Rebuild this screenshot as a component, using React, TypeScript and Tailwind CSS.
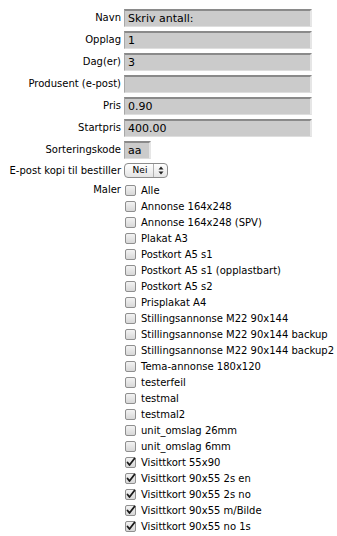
import React from "react";

const font = { fontFamily: '"DejaVu Sans", Verdana, sans-serif' };

function Input({ value, w = "w-[188px]" }: { value: string; w?: string }) {
  return (
    <div
      className={`${w} h-[18px] bg-[#cbcbcb] border-t-2 border-t-[#8a8a8a] border-l border-l-[#a8a8a8] border-r-2 border-r-[#e6e6e6] border-b border-b-[#dedede] pl-[3px] text-[11px] leading-[15px] text-black`}
    >
      {value}
    </div>
  );
}

function Box({ checked }: { checked: boolean }) {
  return (
    <svg width="12" height="12" viewBox="0 0 12 12" className="shrink-0">
      <defs>
        <linearGradient id="cbg" x1="0" y1="0" x2="0" y2="1">
          <stop offset="0" stopColor="#f4f4f4" />
          <stop offset="1" stopColor="#d6d6d6" />
        </linearGradient>
      </defs>
      <rect x="1.5" y="1.5" width="10" height="10" rx="1.5" fill="url(#cbg)" stroke="#8f8f8f" />
      {checked && (
        <path d="M3.5 6.5 L5.5 9 L10.5 2.5" fill="none" stroke="#1a1a1a" strokeWidth="1.8" strokeLinecap="round" strokeLinejoin="round" />
      )}
    </svg>
  );
}

const items: [string, boolean][] = [
  ["Alle", false],
  ["Annonse 164x248", false],
  ["Annonse 164x248 (SPV)", false],
  ["Plakat A3", false],
  ["Postkort A5 s1", false],
  ["Postkort A5 s1 (opplastbart)", false],
  ["Postkort A5 s2", false],
  ["Prisplakat A4", false],
  ["Stillingsannonse M22 90x144", false],
  ["Stillingsannonse M22 90x144 backup", false],
  ["Stillingsannonse M22 90x144 backup2", false],
  ["Tema-annonse 180x120", false],
  ["testerfeil", false],
  ["testmal", false],
  ["testmal2", false],
  ["unit_omslag 26mm", false],
  ["unit_omslag 6mm", false],
  ["Visittkort 55x90", true],
  ["Visittkort 90x55 2s en", true],
  ["Visittkort 90x55 2s no", true],
  ["Visittkort 90x55 m/Bilde", true],
  ["Visittkort 90x55 no 1s", true],
];

function Label({ children }: { children: React.ReactNode }) {
  return <div className="text-right text-[10px] leading-[18px] text-black whitespace-nowrap">{children}</div>;
}

export default function App() {
  return (
    <div className="w-[337px] h-[536px] bg-white overflow-hidden" style={font}>
      <div className="grid grid-cols-[121px_1fr] gap-x-[3px] gap-y-[4px] pt-[9px]">
        <Label>Navn</Label>
        <Input value="Skriv antall:" />
        <Label>Opplag</Label>
        <Input value="1" />
        <Label>Dag(er)</Label>
        <Input value="3" />
        <Label>Produsent (e-post)</Label>
        <Input value="" />
        <Label>Pris</Label>
        <Input value="0.90" />
        <Label>Startpris</Label>
        <Input value="400.00" />
        <Label>Sorteringskode</Label>
        <Input value="aa" w="w-[27px]" />
        <div className="text-right text-[10px] leading-[15px] text-black whitespace-nowrap">E-post kopi til bestiller</div>
        <div className="h-[15px] flex items-center">
          <div className="w-[44px] h-[15px] rounded-[4px] border border-[#8c8c8c] bg-gradient-to-b from-white to-[#e4e4e4] flex items-center text-[9px] text-black">
            <span className="flex-1 text-center pl-[2px]">Nei</span>
            <span className="w-[14px] h-full border-l border-[#b0b0b0] flex items-center justify-center">
              <svg width="6" height="9" viewBox="0 0 6 9">
                <path d="M3 0.5 L5.5 3.5 L0.5 3.5 Z" fill="#222" />
                <path d="M3 8.5 L5.5 5.5 L0.5 5.5 Z" fill="#222" />
              </svg>
            </span>
          </div>
        </div>
        <div className="text-right text-[10px] leading-[16px] text-black">Maler</div>
        <div className="flex flex-col">
          {items.map(([t, c]) => (
            <div key={t} className="h-[16px] flex items-center gap-[5px] text-[10px] text-black whitespace-nowrap">
              <Box checked={c} />
              <span>{t}</span>
            </div>
          ))}
        </div>
      </div>
    </div>
  );
}
